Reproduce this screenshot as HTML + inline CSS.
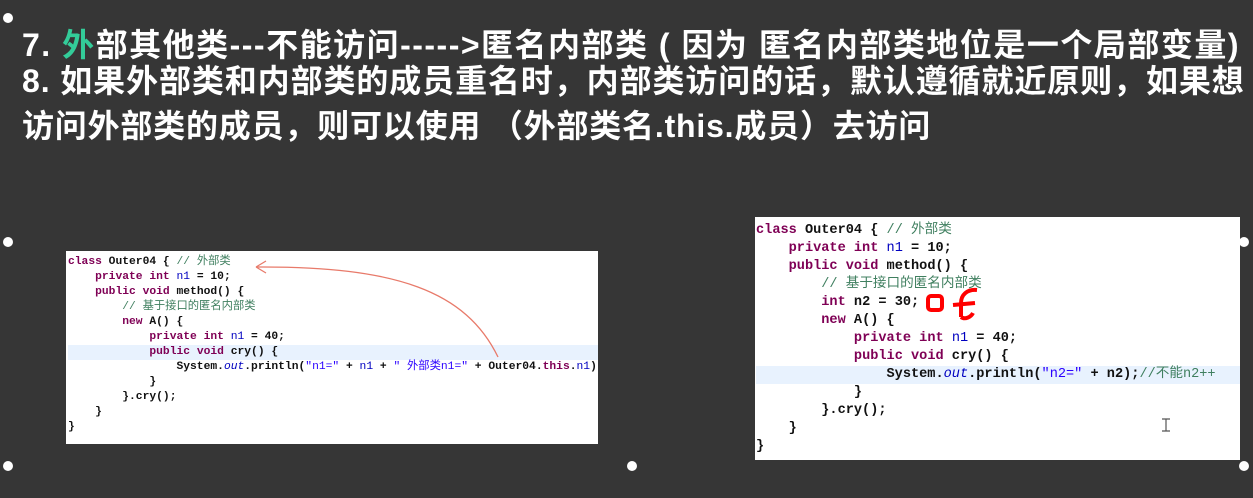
<!DOCTYPE html>
<html><head><meta charset="utf-8"><style>
body{margin:0;width:1253px;height:498px;background:#363636;overflow:hidden;position:relative;font-family:"Liberation Sans","Noto Sans CJK SC",sans-serif}
.t{position:absolute;left:22px;color:#fff;font-weight:bold;font-size:32px;white-space:nowrap;letter-spacing:1.5px;line-height:40px}
.dot{position:absolute;width:10px;height:10px;border-radius:50%;background:#fff}
.code{position:absolute;background:#fff;font-family:"Liberation Mono","Noto Sans CJK SC",monospace;font-weight:bold;color:#111}
.code div{position:relative;white-space:pre}
.k{color:#7f0055}.c{color:#3f7f5f;font-weight:normal}.f{color:#0000c0;font-weight:normal}.s{color:#2a00ff;font-weight:normal}.i{color:#0000c0;font-style:italic;font-weight:normal}
.hl{background:#e8f2fe}
</style></head><body>
<div class="t" style="top:25px">7. <span style="color:#3c9">外</span>部其他类---不能访问----->匿名内部类 ( 因为 匿名内部类地位是一个局部变量)</div>
<div class="t" style="top:61px;letter-spacing:0.9px">8. 如果外部类和内部类的成员重名时，内部类访问的话，默认遵循就近原则，如果想</div>
<div class="t" style="top:106px;letter-spacing:0.8px">访问外部类的成员，则可以使用 （外部类名.this.成员）去访问</div>
<div class="dot" style="left:3px;top:13px"></div>
<div class="dot" style="left:3px;top:237px"></div>
<div class="dot" style="left:3px;top:461px"></div>
<div class="dot" style="left:627px;top:461px"></div>
<div class="dot" style="left:1239px;top:237px"></div>
<div class="dot" style="left:1239px;top:461px"></div>
<div class="code" style="left:66px;top:251px;width:532px;height:193px;font-size:11.3px;line-height:15px;padding-top:4px;box-sizing:border-box;padding-left:2px;overflow:hidden"><div><span class="k">class</span> Outer04 { <span class="c">// 外部类</span></div><div>    <span class="k">private int</span> <span class="f">n1</span> = 10;</div><div>    <span class="k">public void</span> method() {</div><div>        <span class="c">// 基于接口的匿名内部类</span></div><div>        <span class="k">new</span> A() {</div><div>            <span class="k">private int</span> <span class="f">n1</span> = 40;</div><div class="hl">            <span class="k">public void</span> cry() {</div><div>                System.<span class="i">out</span>.println(<span class="s">"n1="</span> + <span class="f">n1</span> + <span class="s">" 外部类n1="</span> + Outer04.<span class="k">this</span>.<span class="f">n1</span>)</div><div>            }</div><div>        }.cry();</div><div>    }</div><div>}</div><svg style="position:absolute;left:0;top:0" width="532" height="193"><path d="M432 106 C 400 40, 330 15, 190 16 M190 16 l10 -6 M190 16 l10 6" stroke="#e87a6a" stroke-width="1.3" fill="none"/></svg></div>
<div class="code" style="left:755px;top:217px;width:485px;height:243px;font-size:13.6px;line-height:18px;padding-top:5px;box-sizing:border-box;padding-left:1px"><div><span class="k">class</span> Outer04 { <span class="c">// 外部类</span></div><div>    <span class="k">private int</span> <span class="f">n1</span> = 10;</div><div>    <span class="k">public void</span> method() {</div><div>        <span class="c">// 基于接口的匿名内部类</span></div><div>        <span class="k">int</span> n2 = 30;</div><div>        <span class="k">new</span> A() {</div><div>            <span class="k">private int</span> <span class="f">n1</span> = 40;</div><div>            <span class="k">public void</span> cry() {</div><div class="hl">                System.<span class="i">out</span>.println(<span class="s">"n2="</span> + n2);<span class="c">//不能n2++</span></div><div>            }</div><div>        }.cry();</div><div>    }</div><div>}</div><svg style="position:absolute;left:0;top:0" width="485" height="243"><rect x="173" y="79" width="14" height="14" rx="3" stroke="#f00" stroke-width="4" fill="none"/><path d="M222 73 C212 72,206 78,206 86 L206 100 M198 88 L220 86 M206 100 C210 103,216 100,218 96" stroke="#f00" stroke-width="4" fill="none"/><path d="M411 202 v12 M407 202 h8 M407 214 h8" stroke="#555" stroke-width="1.2"/></svg></div>
</body></html>
